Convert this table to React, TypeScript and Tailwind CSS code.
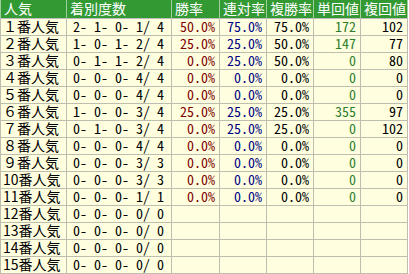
import React from "react";

type Row = {
  label: string;
  record: string;
  win?: string;
  rentai?: string;
  fukusho?: string;
  tan?: string;
  fuku?: string;
};

const rows: Row[] = [
  { label: "１番人気", record: "2- 1- 0- 1/ 4", win: "50.0%", rentai: "75.0%", fukusho: "75.0%", tan: "172", fuku: "102" },
  { label: "２番人気", record: "1- 0- 1- 2/ 4", win: "25.0%", rentai: "25.0%", fukusho: "50.0%", tan: "147", fuku: "77" },
  { label: "３番人気", record: "0- 1- 1- 2/ 4", win: "0.0%", rentai: "25.0%", fukusho: "50.0%", tan: "0", fuku: "80" },
  { label: "４番人気", record: "0- 0- 0- 4/ 4", win: "0.0%", rentai: "0.0%", fukusho: "0.0%", tan: "0", fuku: "0" },
  { label: "５番人気", record: "0- 0- 0- 4/ 4", win: "0.0%", rentai: "0.0%", fukusho: "0.0%", tan: "0", fuku: "0" },
  { label: "６番人気", record: "1- 0- 0- 3/ 4", win: "25.0%", rentai: "25.0%", fukusho: "25.0%", tan: "355", fuku: "97" },
  { label: "７番人気", record: "0- 1- 0- 3/ 4", win: "0.0%", rentai: "25.0%", fukusho: "25.0%", tan: "0", fuku: "102" },
  { label: "８番人気", record: "0- 0- 0- 4/ 4", win: "0.0%", rentai: "0.0%", fukusho: "0.0%", tan: "0", fuku: "0" },
  { label: "９番人気", record: "0- 0- 0- 3/ 3", win: "0.0%", rentai: "0.0%", fukusho: "0.0%", tan: "0", fuku: "0" },
  { label: "10番人気", record: "0- 0- 0- 3/ 3", win: "0.0%", rentai: "0.0%", fukusho: "0.0%", tan: "0", fuku: "0" },
  { label: "11番人気", record: "0- 0- 0- 1/ 1", win: "0.0%", rentai: "0.0%", fukusho: "0.0%", tan: "0", fuku: "0" },
  { label: "12番人気", record: "0- 0- 0- 0/ 0" },
  { label: "13番人気", record: "0- 0- 0- 0/ 0" },
  { label: "14番人気", record: "0- 0- 0- 0/ 0" },
  { label: "15番人気", record: "0- 0- 0- 0/ 0" },
];

const headers = ["人気", "着別度数", "勝率", "連対率", "複勝率", "単回値", "複回値"];

const cell = "border border-[#bdbdb0] p-0 leading-[15px] [font-feature-settings:'hwid']";

export default function App() {
  return (
    <div className="w-[409px] h-[274px] bg-white font-['Noto_Sans_CJK_JP',sans-serif] text-[14px]">
      <table className="table-fixed border-collapse w-[408px]">
        <colgroup>
          <col className="w-[66px]" />
          <col className="w-[105px]" />
          <col className="w-[48px]" />
          <col className="w-[47px]" />
          <col className="w-[47px]" />
          <col className="w-[47px]" />
          <col className="w-[47px]" />
        </colgroup>
        <thead>
          <tr className="bg-[#339933] text-white h-[18px]">
            {headers.map((h) => (
              <th
                key={h}
                className="border-x border-x-[#9fcf9f] border-b border-b-[#bdbdbd] p-0 pl-[3px] leading-[17px] text-left text-[14px] font-normal whitespace-nowrap"
              >
                {h}
              </th>
            ))}
          </tr>
        </thead>
        <tbody className="bg-[#ffffe0]">
          {rows.map((r) => (
            <tr key={r.label} className="h-[17px]">
              <td className="border border-[#bdbdb0] p-0 pl-[2px] leading-[15px] whitespace-nowrap">{r.label}</td>
              <td className={`${cell} pl-[6px] whitespace-pre`}>{r.record}</td>
              <td className={`${cell} pr-[4px] text-right text-[#800000]`}>{r.win}</td>
              <td className={`${cell} pr-[4px] text-right text-[#000080]`}>{r.rentai}</td>
              <td className={`${cell} pr-[4px] text-right`}>{r.fukusho}</td>
              <td className={`${cell} pr-[4px] text-right text-[#2e7d2e]`}>{r.tan}</td>
              <td className={`${cell} pr-[4px] text-right`}>{r.fuku}</td>
            </tr>
          ))}
        </tbody>
      </table>
    </div>
  );
}
